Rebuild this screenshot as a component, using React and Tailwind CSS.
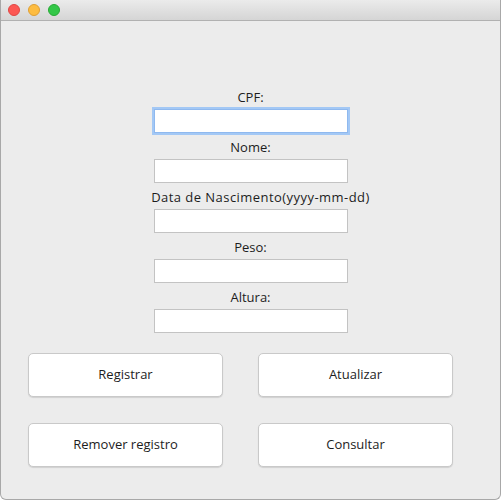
import React from "react";

const fields = [
  { label: "CPF:", focused: true },
  { label: "Nome:" },
  { label: "Data de Nascimento(yyyy-mm-dd)", wide: true },
  { label: "Peso:" },
  { label: "Altura:" },
];

const buttons = ["Registrar", "Atualizar", "Remover registro", "Consultar"];

const App = () => {
  return (
    <div
      className="w-[501px] h-[500px] flex flex-col bg-[#ececec] rounded-b-[6px] border-x border-b border-[#a8a8a8] overflow-hidden text-[13px] text-[#1d1d1d]"
      style={{ fontFamily: '"Open Sans", "Noto Sans", sans-serif' }}
    >
      <div className="h-[21px] shrink-0 flex items-center gap-[8px] pl-[7px] bg-gradient-to-b from-[#ebebeb] to-[#d5d5d5] border-b border-[#b1b1b1]">
        <span className="w-[12px] h-[12px] rounded-full bg-[#fc5753] border border-[#df4744]" />
        <span className="w-[12px] h-[12px] rounded-full bg-[#fdbc40] border border-[#de9f34]" />
        <span className="w-[12px] h-[12px] rounded-full bg-[#33c748] border border-[#27aa35]" />
      </div>

      <div className="flex flex-col items-center pt-[67px]">
        {fields.map((f) => (
          <div key={f.label} className="flex flex-col items-center mb-[5px]">
            <label
              className={
                f.wide
                  ? "h-[18px] leading-[18px] mb-[3px] whitespace-nowrap tracking-[0.45px] ml-[20px]"
                  : "h-[18px] leading-[18px] mb-[3px] whitespace-nowrap"
              }
            >
              {f.label}
            </label>
            <input
              type="text"
              className={
                f.focused
                  ? "w-[194px] h-[24px] bg-white border border-[#8fb9ef] outline-[2px] outline-solid outline-[#a3c8f5]"
                  : "w-[194px] h-[24px] bg-white border border-[#c3c3c3]"
              }
            />
          </div>
        ))}
      </div>

      <div className="grid grid-cols-[195px_195px] gap-x-[35px] gap-y-[26px] pl-[27px] mt-[15px]">
        {buttons.map((b) => (
          <button
            key={b}
            className="h-[44px] bg-white border border-[#c9c9c9] rounded-[5px] shadow-[0_1px_1px_rgba(0,0,0,0.12)] text-[13px] text-[#1d1d1d]"
          >
            {b}
          </button>
        ))}
      </div>
    </div>
  );
};

export default App;
